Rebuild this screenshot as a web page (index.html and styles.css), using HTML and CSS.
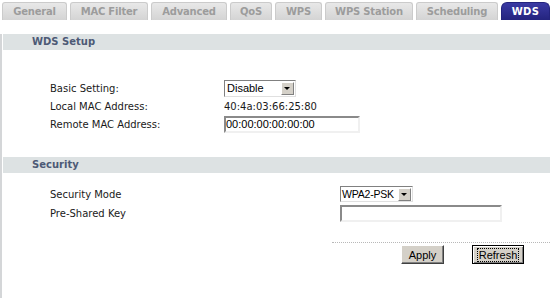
FILE: index.html
```html
<!DOCTYPE html>
<html>
<head>
    <title>WDS</title>
    <link rel="stylesheet" href="styles.css">
</head>
<body>
    <div class="tabs">
        <a class="tab t-general">General</a>
        <a class="tab t-mac">MAC Filter</a>
        <a class="tab t-adv">Advanced</a>
        <a class="tab t-qos">QoS</a>
        <a class="tab t-wps">WPS</a>
        <a class="tab t-station">WPS Station</a>
        <a class="tab t-sched">Scheduling</a>
        <a class="tab active">WDS</a>
    </div>

    <div class="page">
        <div class="section-title first">WDS Setup</div>
        <div class="form wds">
            <label>Basic Setting:</label>
            <div class="val">
                <div class="select sel-basic"><span>Disable</span><i class="arrow"></i></div>
            </div>
            <label>Local MAC Address:</label>
            <div class="val mac">40:4a:03:66:25:80</div>
            <label>Remote MAC Address:</label>
            <div class="val">
                <input type="text" class="text remote" value="00:00:00:00:00:00">
            </div>
        </div>

        <div class="section-title">Security</div>
        <div class="form sec">
            <label>Security Mode</label>
            <div class="val">
                <div class="select sel-mode"><span>WPA2-PSK</span><i class="arrow"></i></div>
            </div>
            <label>Pre-Shared Key</label>
            <div class="val">
                <input type="text" class="text psk" value="">
            </div>
        </div>

        <div class="actions">
            <button type="button" class="btn apply">Apply</button>
            <button type="button" class="btn refresh"><span>Refresh</span></button>
        </div>
    </div>
    <div class="footer"></div>
</body>
</html>
```

FILE: styles.css
```css
body {
    margin: 0;
    width: 550px;
    height: 298px;
    overflow: hidden;
    background: #fff;
    font-family: "DejaVu Sans", Verdana, sans-serif;
    font-size: 10px;
    color: #1a1a1a;
}

.tabs {
    display: flex;
    gap: 3px;
    padding: 2px 0 0 2px;
    height: 20px;
    box-sizing: border-box;
    white-space: nowrap;
}

.tab {
    display: block;
    flex: none;
    height: 18px;
    line-height: 18px;
    text-align: center;
    background: linear-gradient(#e8e8e8, #d4d4d4);
    border: 1px solid #cbcbcb;
    border-bottom: none;
    border-radius: 3px 3px 0 0;
    color: #9c9c9c;
    font-weight: bold;
    font-size: 10px;
    letter-spacing: -0.2px;
    box-sizing: border-box;
}

.t-general { width: 65px; }
.t-mac { width: 78px; }
.t-adv { width: 76px; }
.t-qos { width: 42px; }
.t-wps { width: 47px; }
.t-station { width: 88px; }
.t-sched { width: 82px; }

.tab.active {
    background: linear-gradient(#3a3aa4, #24247e);
    border-color: #24247e;
    color: #fff;
    border-radius: 6px 6px 0 0;
    flex: 1;
    letter-spacing: 0.3px;
}

.page {
    border-left: 2px solid #d4d6d8;
    height: 273px;
    padding-left: 1px;
    box-sizing: border-box;
}

.section-title {
    height: 16px;
    line-height: 16px;
    background: #dde2e3;
    padding-left: 29px;
    font-weight: bold;
    color: #4d5a76;
    margin-top: 24px;
}

.section-title.first {
    margin-top: 14px;
}

.form {
    display: grid;
    align-items: center;
    padding-left: 47px;
    white-space: nowrap;
}

.form label {
    display: block;
}

.wds {
    grid-template-columns: 174px auto;
    grid-template-rows: 18px 16px 18px;
    row-gap: 1px;
    padding-top: 29px;
}

.sec {
    grid-template-columns: 290px auto;
    grid-template-rows: 16px 16px;
    row-gap: 3px;
    padding-top: 13px;
}

.val {
    display: flex;
    align-items: center;
}

.select {
    display: flex;
    align-items: center;
    justify-content: space-between;
    height: 17px;
    box-sizing: border-box;
    border: 1px solid;
    border-color: #808080 #e0e0e0 #e0e0e0 #808080;
    background: #fff;
    font-family: "Liberation Sans", Arial, sans-serif;
    font-size: 11px;
    color: #000;
    padding-left: 2px;
    padding-right: 1px;
}

.select span {
    flex: none;
}

.sel-basic {
    width: 72px;
}

.sel-mode {
    width: 73px;
    height: 16px;
    font-size: 10.5px;
    padding-left: 1px;
    letter-spacing: -0.2px;
}

.arrow {
    flex: none;
    width: 13px;
    height: 13px;
    box-sizing: border-box;
    background: #d4d0c8;
    border: 1px solid;
    border-color: #fff #808080 #808080 #fff;
    position: relative;
}

.arrow::after {
    content: "";
    position: absolute;
    left: 2px;
    top: 4px;
    border-left: 3px solid transparent;
    border-right: 3px solid transparent;
    border-top: 3px solid #000;
}

.text {
    height: 17px;
    box-sizing: border-box;
    border: 2px solid;
    border-color: #8a8a8a #f0f0f0 #f0f0f0 #8a8a8a;
    font-family: "Liberation Sans", Arial, sans-serif;
    font-size: 11px;
    color: #000;
    padding: 0;
    margin: 0;
    outline: none;
}

.remote {
    width: 136px;
}

.psk {
    width: 162px;
}

.actions {
    margin: 21px 0 0 329px;
    border-top: 1px dotted #b8b8b8;
    padding: 2px 0 0 69px;
    display: flex;
    gap: 28px;
}

.btn {
    height: 19px;
    box-sizing: border-box;
    background: #d4d0c8;
    border: 1px solid;
    border-color: #fff #404040 #404040 #fff;
    box-shadow: inset -1px -1px 0 #808080;
    font-family: "Liberation Sans", Arial, sans-serif;
    font-size: 11px;
    color: #000;
    padding: 0;
}

.apply {
    width: 43px;
}

.refresh {
    width: 52px;
    border-color: #000;
    box-shadow: inset 1px 1px 0 #fff, inset -1px -1px 0 #808080;
}

.refresh span {
    display: inline-block;
    border: 1px dotted #000;
    padding: 0 1px;
    line-height: 12px;
}

.footer {
    height: 5px;
    border-top: 2px solid #e4e6ea;
    background: #7a8293;
    box-sizing: border-box;
}
```
